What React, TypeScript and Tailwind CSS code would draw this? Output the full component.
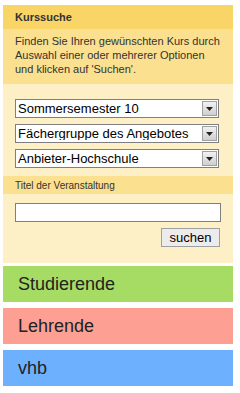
import React from "react";

function Select({ label }: { label: string }) {
  return (
    <div className="flex h-[19px] w-[204px] items-center border border-[#7f7f7f] bg-white">
      <div className="flex-1 overflow-hidden whitespace-nowrap pl-[2px] text-[13px] leading-none text-black">{label}</div>
      <div className="mr-[1px] flex h-[15px] w-[15px] items-center justify-center border border-[#a0a0a0] bg-gradient-to-b from-[#f2f2f2] to-[#cfcfcf]">
        <svg width="7" height="4" viewBox="0 0 7 4"><path d="M0 0h7L3.5 4z" fill="#222" /></svg>
      </div>
    </div>
  );
}

export default function App() {
  return (
    <div className="w-[240px] bg-white px-[3px] pt-[5px] pb-[8px]" style={{ fontFamily: '"Liberation Sans", Arial, sans-serif' }}>
      <div className="w-[230px]">
        <div className="flex h-[24px] items-center bg-[#f9d466] pl-[12px] text-[11px] font-bold text-[#333]">Kurssuche</div>
        <div className="bg-[#fbe08f] px-[12px] pt-[5px] pb-[8px] text-[11px] leading-[14px] text-[#333]">
          Finden Sie Ihren gewünschten Kurs durch Auswahl einer oder mehrerer Optionen und klicken auf 'Suchen'.
        </div>
        <div className="bg-[#fdefc6] pt-[15px] pb-[16px]">
          <div className="flex flex-col gap-[6px] pl-[12px]">
            <Select label="Sommersemester 10" />
            <Select label="Fächergruppe des Angebotes" />
            <Select label="Anbieter-Hochschule" />
          </div>
          <div className="mt-[8px] flex h-[18px] items-center bg-[#fbe08f] pl-[12px] text-[10px] text-[#333]">Titel der Veranstaltung</div>
          <div className="mt-[9px] pl-[12px]">
            <div className="h-[19px] w-[206px] border border-[#7f7f7f] bg-white" />
          </div>
          <div className="mt-[6px] flex justify-end pr-[13px]">
            <div className="flex h-[19px] w-[59px] items-center justify-center border border-[#a0a0a0] bg-[#ececec] text-[13px] text-black">suchen</div>
          </div>
        </div>
        <div className="mt-[3px] flex h-[36px] items-center bg-[#a6dc64] pl-[15px] text-[18px] text-[#222]">Studierende</div>
        <div className="mt-[6px] flex h-[36px] items-center bg-[#fe9f94] pl-[15px] text-[18px] text-[#222]">Lehrende</div>
        <div className="mt-[6px] flex h-[36px] items-center bg-[#6db1fe] pl-[15px] text-[18px] text-[#222]">vhb</div>
      </div>
    </div>
  );
}
